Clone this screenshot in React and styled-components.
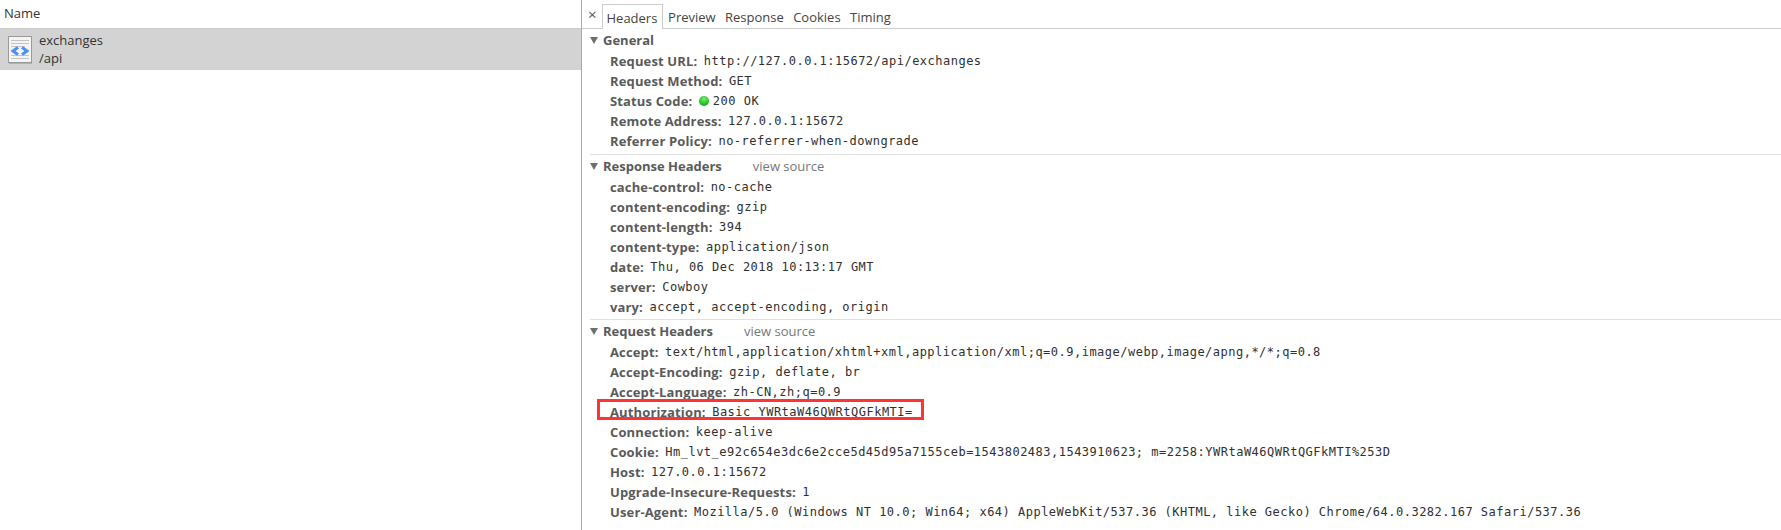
import React from "react";
import styled, { createGlobalStyle } from "styled-components";

const Global = createGlobalStyle`
  html, body { margin: 0; padding: 0; background: #fff; }
  #root { width: 1781px; height: 530px; overflow: hidden; }
`;
const Page = styled.div`
  display: flex; width: 1781px; height: 530px; background: #fff;
  font-family: "Open Sans", "Noto Sans", sans-serif; font-size: 13px; color: #333;
`;
const LeftPane = styled.div`
  width: 581px; flex: none; display: flex; flex-direction: column;
`;
const NameHeader = styled.div`
  height: 29px; box-sizing: border-box; padding: 0 4px 2px; display: flex; align-items: center;
  border-bottom: 1px solid #ccc; font-size: 13px; color: #333;
`;
const RequestRow = styled.div`
  height: 41px; background: #d3d3d3; display: flex; align-items: center; padding-left: 8px; gap: 7px;
`;
const RequestText = styled.div`
  font-size: 13px; line-height: 18px; color: #333; padding-bottom: 2px;
`;
const RightPane = styled.div`
  flex: 1; border-left: 1px solid #aaa; display: flex; flex-direction: column; min-width: 0;
`;
const TabBar = styled.div`
  height: 29px; box-sizing: border-box; border-bottom: 1px solid #ccc; display: flex; align-items: flex-end; padding-left: 5px;
`;
const Close = styled.div`
  width: 15px; height: 24px; font-size: 15px; color: #555; line-height: 20px; padding-left: 1px; box-sizing: border-box;
`;
const Tab = styled.div`
  height: ${p => (p.$active ? 25 : 24)}px; box-sizing: border-box; padding: 0 4.7px; line-height: 26px; font-size: 13px; color: #444;
  ${p => p.$active ? "border: 1px solid #ccc; border-bottom: none; margin-bottom: -1px; background:#fff; padding: 0 5px 0 3.5px;" : ""}
`;
const Section = styled.div`
  margin: 0 0 0 8px; padding: 1px 0 ${p => p.$bottom}px; border-bottom: ${p => (p.$last ? "none" : "1px solid #e0e0e0")};
`;
const SectionTitle = styled.div`
  height: 20px; display: flex; align-items: center; font-weight: 700; color: #5a5a5a; font-size: 13px;
`;
const Arrow = styled.span`
  width: 0; height: 0; margin: 0 5px 0 0; border-left: 4px solid transparent; border-right: 4px solid transparent; border-top: 7px solid #6e6e6e;
`;
const ViewSource = styled.span`
  font-weight: 400; color: #777; margin-left: ${p => p.$gap}px;
`;
const Row = styled.div`
  height: 20px; box-sizing: border-box; padding: 1px 0 0 20px; display: flex; align-items: center; white-space: nowrap;
`;
const Key = styled.span`
  font-weight: 700; color: #5a5a5a; margin-right: 6.5px; font-size: 13px; letter-spacing: 0.14px;
`;
const Value = styled.span`
  font-family: "DejaVu Sans Mono", "Liberation Mono", monospace; font-size: 12px; color: #303030; letter-spacing: 0.49px;
`;
const Dot = styled.span`
  width: 10px; height: 10px; border-radius: 50%; margin-right: 4px;
  background: radial-gradient(circle at 50% 30%, #7fe87f, #16c016 65%, #109a10);
`;
const Highlight = styled.div`
  position: relative;
  &::after {
    content: ""; position: absolute; left: 7px; top: -2px; width: 327px; height: 21px;
    border: 3px solid #f33; box-sizing: border-box;
  }
`;

const FileIcon = () => (
  <svg width="24" height="28" viewBox="0 0 24 28">
    <rect x="0.5" y="0.5" width="23" height="26" fill="#f4f4f4" stroke="#9a9a9a" />
    <path d="M1 27.5h23" stroke="#b0b0b0" />
    <path d="M3 4.5h18M3 7.5h18M3 10.5h14M3 19.5h18M3 22.5h18" stroke="#c4c4c4" />
    <path d="M2.5 15 L9 10.2 L11 12.6 L7.6 15 L11 17.4 L9 19.8 Z M21.5 15 L15 10.2 L13 12.6 L16.4 15 L13 17.4 L15 19.8 Z" fill="#4d90f0" />
  </svg>
);

const general = [
  ["Request URL:", "http://127.0.0.1:15672/api/exchanges"],
  ["Request Method:", "GET"],
  ["Status Code:", "200 OK", true],
  ["Remote Address:", "127.0.0.1:15672"],
  ["Referrer Policy:", "no-referrer-when-downgrade"],
];
const response = [
  ["cache-control:", "no-cache"],
  ["content-encoding:", "gzip"],
  ["content-length:", "394"],
  ["content-type:", "application/json"],
  ["date:", "Thu, 06 Dec 2018 10:13:17 GMT"],
  ["server:", "Cowboy"],
  ["vary:", "accept, accept-encoding, origin"],
];
const request = [
  ["Accept:", "text/html,application/xhtml+xml,application/xml;q=0.9,image/webp,image/apng,*/*;q=0.8"],
  ["Accept-Encoding:", "gzip, deflate, br"],
  ["Accept-Language:", "zh-CN,zh;q=0.9"],
  ["Authorization:", "Basic YWRtaW46QWRtQGFkMTI=", false, true],
  ["Connection:", "keep-alive"],
  ["Cookie:", "Hm_lvt_e92c654e3dc6e2cce5d45d95a7155ceb=1543802483,1543910623; m=2258:YWRtaW46QWRtQGFkMTI%253D"],
  ["Host:", "127.0.0.1:15672"],
  ["Upgrade-Insecure-Requests:", "1"],
  ["User-Agent:", "Mozilla/5.0 (Windows NT 10.0; Win64; x64) AppleWebKit/537.36 (KHTML, like Gecko) Chrome/64.0.3282.167 Safari/537.36"],
];

const Rows = ({ items }) =>
  items.map(([k, v, dot, hl]) => {
    const row = (
      <Row key={k}>
        <Key>{k}</Key>
        {dot && <Dot />}
        <Value>{v}</Value>
      </Row>
    );
    return hl ? <Highlight key={k}>{row}</Highlight> : row;
  });

export default function App() {
  return (
    <Page>
      <Global />
      <LeftPane>
        <NameHeader>Name</NameHeader>
        <RequestRow>
          <FileIcon />
          <RequestText>exchanges<br />/api</RequestText>
        </RequestRow>
      </LeftPane>
      <RightPane>
        <TabBar>
          <Close>×</Close>
          <Tab $active>Headers</Tab>
          <Tab>Preview</Tab>
          <Tab>Response</Tab>
          <Tab>Cookies</Tab>
          <Tab>Timing</Tab>
        </TabBar>
        <Section $bottom={4}>
          <SectionTitle><Arrow />General</SectionTitle>
          <Rows items={general} />
        </Section>
        <Section $bottom={3}>
          <SectionTitle><Arrow />Response Headers<ViewSource $gap={31}>view source</ViewSource></SectionTitle>
          <Rows items={response} />
        </Section>
        <Section $last $bottom={3}>
          <SectionTitle><Arrow />Request Headers<ViewSource $gap={31}>view source</ViewSource></SectionTitle>
          <Rows items={request} />
        </Section>
      </RightPane>
    </Page>
  );
}
